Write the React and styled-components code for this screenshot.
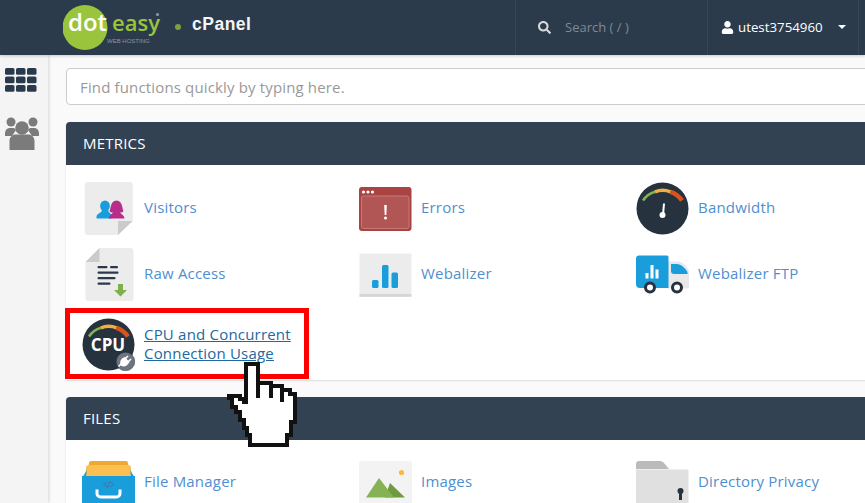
import styled, { createGlobalStyle } from "styled-components";
import { FaSearch, FaUser } from "react-icons/fa";

const GlobalStyle = createGlobalStyle`
  html, body {
    margin: 0;
    padding: 0;
    background: #fafafa;
  }
  * {
    box-sizing: border-box;
  }
`;

function Logo() {
  return (
    <svg width="100" height="50" viewBox="0 0 100 50">
      <circle cx="22" cy="24.500" r="22.500" fill="#9ac43c" />
      <text x="5" y="27.500" fontFamily="Open Sans" fontWeight="600" fontSize="24" fill="#fff">dot</text>
      <text x="49" y="27.500" fontFamily="Open Sans" fontWeight="600" fontSize="22" fill="#9ac43c">easy</text>
      <text x="44" y="39.500" fontFamily="Liberation Sans" fontSize="6" fill="#8d97a2">WEB HOSTING</text>
      <circle cx="94.500" cy="11.500" r="1.600" fill="#8d97a2" />
    </svg>
  );
}

function GridIcon() {
  const cells = [];
  [0, 8.5, 17].forEach((y) => {
    [0, 11, 22].forEach((x) => {
      cells.push(<rect key={x + "-" + y} x={x} y={y} width="9.5" height="6.8" rx="1.6" fill="#293a4c" />);
    });
  });
  return (
    <svg width="32" height="24" viewBox="0 0 32 24">
      {cells}
    </svg>
  );
}

function UsersIcon() {
  return (
    <svg width="34" height="33" viewBox="0 0 34 33" fill="#7b7b7b">
      <circle cx="6" cy="5" r="4.5" />
      <circle cx="28" cy="5" r="4.5" />
      <path d="M0 17c0-4 2-6 5-6h4l2 2-4 6H0z" />
      <path d="M34 17c0-4-2-6-5-6h-4l-2 2 4 6h7z" />
      <circle cx="17" cy="11" r="6.8" />
      <path d="M4.5 33v-9c0-4 3-6.500 6-6.500h13c3 0 6 2.500 6 6.500v9c0 .500-.5 0-1 0H5.500z" />
    </svg>
  );
}

function VisitorsIcon() {
  return (
    <svg width="53" height="53" viewBox="0 0 53 53">
      <path d="M6.500 0h42a3 3 0 0 1 3 3v36l-15 14h-30a3 3 0 0 1-3-3V3a3 3 0 0 1 3-3z" transform="translate(-0.700 0)" fill="#ececec" />
      <path d="M50.500 39H36v14z" fill="#cbcbcb" />
      <path d="M14.500 36.500v-2c0-2.500 4-3.500 5-5 .5-1 .2-1.500-.5-2.500-1.500-2-1.500-8 4-8.500 5.500.5 5.500 6.500 4 8.500-.7 1-1 1.500-.5 2.500 1 1.500 3 2.500 3 4.500v2.500z" fill="#1a9edb" />
      <path d="M27 36.500c-.5-3 3-4.500 4-6-1.500 0-3-.5-3.500-1.500 1.500-2 .5-10 7-10.500 6.500.5 5.500 8.500 7 10.500-.5 1-2 1.500-3.500 1.500 1 1.500 4.500 3 4.500 6z" fill="#b92d8a" />
    </svg>
  );
}

function RawAccessIcon() {
  return (
    <svg width="53" height="53" viewBox="0 0 53 53">
      <path d="M17.500 0h31a3 3 0 0 1 3 3v47a3 3 0 0 1-3 3h-42a3 3 0 0 1-3-3V14z" fill="#ececec" />
      <path d="M17.500 0v14H3.500z" fill="#cbcbcb" />
      <g fill="#2b3a4a">
        <rect x="15.500" y="18" width="10" height="2.200" rx="1" />
        <rect x="28" y="18" width="8" height="2.200" rx="1" />
        <rect x="15.500" y="23.500" width="21" height="2.200" rx="1" />
        <rect x="15.500" y="29" width="18" height="2.200" rx="1" />
        <rect x="15.500" y="34.500" width="13" height="2.200" rx="1" />
      </g>
      <path d="M36 36h5v6h4l-6.500 6.500L32 42h4z" fill="#7fb04b" />
    </svg>
  );
}

function ErrorsIcon() {
  return (
    <svg width="53" height="53" viewBox="0 0 53 53">
      <rect x="0" y="5" width="52.500" height="44" rx="3" fill="#a94442" />
      <rect x="2.500" y="14" width="47.500" height="32.500" rx="2" fill="#b25655" stroke="#c47a79" />
      <circle cx="4.500" cy="10" r="1.600" fill="#fff" />
      <circle cx="9" cy="10" r="1.600" fill="#fff" />
      <circle cx="13.500" cy="10" r="1.600" fill="#fff" />
      <path d="M25.200 23h2.600l-.5 10h-1.600z" fill="#fff" />
      <circle cx="26.500" cy="36" r="1.500" fill="#fff" />
    </svg>
  );
}

function Gauge({ children }) {
  return (
    <svg width="53" height="53" viewBox="0 0 53 53">
      <circle cx="26.500" cy="26.500" r="26" fill="#26323e" />
      <path d="M7 18.500A22 22 0 0 1 19 9.800" fill="none" stroke="#86b34e" strokeWidth="2.500" />
      <path d="M19 9.800A22 22 0 0 1 34.500 9.800" fill="none" stroke="#f0b040" strokeWidth="3.500" />
      <path d="M34.500 9.800A22 22 0 0 1 46 18.500" fill="none" stroke="#d9531e" strokeWidth="4.500" />
      {children}
    </svg>
  );
}

function BandwidthIcon() {
  return (
    <Gauge>
      <path d="M27 21.500h2l-1 11.500h-2z" fill="#fff" />
      <circle cx="26.500" cy="33" r="3" fill="#fff" />
    </Gauge>
  );
}

function WebalizerIcon() {
  return (
    <svg width="53" height="53" viewBox="0 0 53 53">
      <path d="M2 5.500h49a1.500 1.500 0 0 1 1.500 1.500v41.500H.5V7A1.500 1.500 0 0 1 2 5.500z" fill="#ececec" />
      <rect x=".5" y="46" width="52" height="2.800" fill="#d5d5d5" />
      <rect x="13" y="32" width="6.500" height="8" rx="1.500" fill="#1a9edb" />
      <rect x="23" y="17" width="6.500" height="23" rx="1.500" fill="#1a9edb" />
      <rect x="32.500" y="24.500" width="6.500" height="15.500" rx="1.500" fill="#1a9edb" />
    </svg>
  );
}

function TruckIcon() {
  return (
    <svg width="53" height="53" viewBox="0 0 53 53">
      <path d="M32 13.500h10c5 0 10 6 11 10v15a2 2 0 0 1-2 2H32z" fill="#e9e9e9" />
      <path d="M35 16h6c4 0 8 4 10.500 8v2H38a3 3 0 0 1-3-3z" fill="#1a9edb" />
      <path d="M3 7.500h28a1.500 1.500 0 0 1 1.500 1.500v31H4a4 4 0 0 1-4-4V10.500a3 3 0 0 1 3-3z" fill="#1a9edb" />
      <g fill="#fff">
        <rect x="9.500" y="25" width="3" height="5.500" />
        <rect x="14.500" y="17" width="3" height="13.500" />
        <rect x="19.500" y="21.500" width="3" height="9" />
      </g>
      <circle cx="14" cy="39.500" r="4.500" fill="#fff" stroke="#26323e" strokeWidth="3" />
      <circle cx="41" cy="39.500" r="4.500" fill="#fff" stroke="#26323e" strokeWidth="3" />
    </svg>
  );
}

function CpuIcon() {
  return (
    <Gauge>
      <text x="26" y="33" textAnchor="middle" fontFamily="Open Sans" fontWeight="700" fontSize="17" fill="#fff">CPU</text>
      <circle cx="43.500" cy="43.500" r="9.300" fill="#6d7680" stroke="#26323e" strokeWidth=".5" />
      <path d="M39 46l-2.500 2.500M39.500 47c3 1.500 5.500-.5 7-3l-4-4c-3 1-4.500 4-3 7zM43 41l3-3M46 44l3-3" fill="#fff" stroke="#fff" strokeWidth="1.600" />
    </Gauge>
  );
}

function FileManagerIcon() {
  return (
    <svg width="53" height="53" viewBox="0 0 53 53">
      <path d="M7 2a2 2 0 0 1 2-2h35a2 2 0 0 1 2 2l1 6H6z" fill="#f0a830" />
      <path d="M4 7a3 3 0 0 1 3-3h39a3 3 0 0 1 3 3l1 12H3z" fill="#fbc04f" />
      <path d="M5 9 0 17v31a3 3 0 0 0 3 3h47a3 3 0 0 0 3-3V17l-5-8 1 6H4z" fill="#1a9edb" />
      <rect x="0" y="15" width="53" height="36" fill="#1a9edb" />
      <path d="M15 28.500v4a3.500 3.500 0 0 0 3.500 3.500h16a3.500 3.500 0 0 0 3.500-3.500v-4" fill="none" stroke="#fff" strokeWidth="3" />
      <path d="M25 21l-3.500 2.500 3.500 2.500M28 21l3.500 2.500-3.500 2.500M27.500 20l-2 7" fill="none" stroke="#3878a8" strokeWidth="1" />
    </svg>
  );
}

function ImagesIcon() {
  return (
    <svg width="53" height="53" viewBox="0 0 53 53">
      <rect x="0" y="0" width="53" height="53" rx="3" fill="#f3f3f3" />
      <circle cx="42.500" cy="11.500" r="2.600" fill="#f9b94a" />
      <path d="M31 22l15 14.500H26z" fill="#6f9a3f" />
      <path d="M20 17l15 19.500H7z" fill="#84b254" />
    </svg>
  );
}

function PrivacyIcon() {
  return (
    <svg width="53" height="53" viewBox="0 0 53 53">
      <path d="M3 0h21c2 0 3 1 4 2l5 6H0V3a3 3 0 0 1 3-3z" fill="#bbb" />
      <path d="M0 8.500h51a1.500 1.500 0 0 1 1.500 1.500v43H0z" fill="#e0e0e0" />
      <circle cx="44.500" cy="30" r="3" fill="#26323e" />
      <rect x="43" y="30" width="3" height="9" fill="#26323e" />
    </svg>
  );
}

function HandCursor() {
  return (
    <HandSvg width="85" height="100" viewBox="0 0 85 100" shapeRendering="crispEdges">
      <path
        d="M26 12H38V31H51V34H62V38H70V42H75V70H71V83H67V93H30V83H27V76H24V68H20V60H16V55H12V46H9V44H20V47H24V50H26Z"
        fill="#fff"
        stroke="#111"
        strokeWidth="4"
      />
      <path d="M38 31V46M51 34V46M62 38V50" fill="none" stroke="#111" strokeWidth="4" />
    </HandSvg>
  );
}

export default function App() {
  const metrics = [
    { icon: <VisitorsIcon />, label: "Visitors" },
    { icon: <ErrorsIcon />, label: "Errors" },
    { icon: <BandwidthIcon />, label: "Bandwidth" },
    { icon: <RawAccessIcon />, label: "Raw Access" },
    { icon: <WebalizerIcon />, label: "Webalizer" },
    { icon: <TruckIcon />, label: "Webalizer FTP" },
  ];
  const files = [
    { icon: <FileManagerIcon />, label: "File Manager" },
    { icon: <ImagesIcon />, label: "Images" },
    { icon: <PrivacyIcon />, label: "Directory Privacy" },
  ];

  return (
    <Page>
      <GlobalStyle />
      <TopBar>
        <Brand>
          <Logo />
          <BrandDot />
          <BrandName>cPanel</BrandName>
        </Brand>
        <SearchCell>
          <FaSearch size={13} color="#d5dade" />
          <SearchHint>Search ( / )</SearchHint>
        </SearchCell>
        <UserCell>
          <FaUser size={13} color="#fff" />
          <UserName>utest3754960</UserName>
          <Caret />
        </UserCell>
        <EndCell />
      </TopBar>
      <Main>
        <Sidebar>
          <GridIcon />
          <UsersIcon />
        </Sidebar>
        <Content>
          <QuickFind placeholder="Find functions quickly by typing here." />
          <Section>
            <SectionTitle>Metrics</SectionTitle>
            <ItemGrid $rows="66px 66px 73px" $top={10}>
              {metrics.map((m) => (
                <Item key={m.label}>
                  {m.icon}
                  <ItemLink>{m.label}</ItemLink>
                </Item>
              ))}
              <Item $nudge>
                <CpuIcon />
                <ItemLink $active>
                  CPU and Concurrent
                  <br />
                  Connection Usage
                </ItemLink>
              </Item>
            </ItemGrid>
          </Section>
          <Section>
            <SectionTitle>Files</SectionTitle>
            <ItemGrid $rows="66px" $top={21}>
              {files.map((f) => (
                <Item key={f.label} $alignTop>
                  {f.icon}
                  <ItemLink $alignTop>{f.label}</ItemLink>
                </Item>
              ))}
            </ItemGrid>
          </Section>
        </Content>
      </Main>
      <Highlight />
      <HandCursor />
    </Page>
  );
}

const Page = styled.div`
  position: relative;
  width: 865px;
  height: 503px;
  overflow: hidden;
  background: #fafafa;
  font-family: "Open Sans", sans-serif;
`;

const TopBar = styled.header`
  position: relative;
  z-index: 2;
  display: flex;
  height: 55px;
  background: #2b3b4c;
  box-shadow: 0 1px 3px rgba(0, 0, 0, 0.2);
`;

const Brand = styled.div`
  flex: 1;
  display: flex;
  align-items: center;
  padding-left: 63px;
`;

const BrandDot = styled.span`
  width: 6px;
  height: 6px;
  margin: -2px 0 0 12px;
  border-radius: 50%;
  background: #7f9f45;
`;

const BrandName = styled.span`
  margin: -6px 0 0 11px;
  font-family: "Liberation Sans", sans-serif;
  font-size: 17.5px;
  font-weight: 700;
  letter-spacing: 0.5px;
  color: #f4f5f6;
`;

const SearchCell = styled.div`
  width: 192px;
  display: flex;
  align-items: center;
  gap: 14px;
  padding: 0 0 1px 22px;
  border-left: 1px solid #36475a;
`;

const SearchHint = styled.span`
  font-size: 13px;
  color: #7f8a95;
`;

const UserCell = styled.div`
  width: 151px;
  display: flex;
  align-items: center;
  padding: 0 0 1px 13px;
  border-left: 1px solid #36475a;
`;

const UserName = styled.span`
  margin-left: 4px;
  font-size: 13.3px;
  color: #fff;
`;

const Caret = styled.span`
  margin-left: 15px;
  border-top: 4.5px solid #fff;
  border-left: 4.5px solid transparent;
  border-right: 4.5px solid transparent;
`;

const EndCell = styled.div`
  width: 7px;
  border-left: 1px solid #36475a;
`;

const Main = styled.div`
  display: flex;
  height: 448px;
`;

const Sidebar = styled.nav`
  width: 48px;
  flex-shrink: 0;
  display: flex;
  flex-direction: column;
  align-items: flex-start;
  gap: 25px;
  padding: 13px 0 0 5px;
  background: #f4f4f4;
  box-shadow: 1px 0 3px rgba(0, 0, 0, 0.15);
`;

const Content = styled.main`
  width: 830px;
  flex-shrink: 0;
  padding: 13px 0 0 18px;
`;

const QuickFind = styled.input`
  display: block;
  width: 100%;
  height: 37px;
  padding: 0 13px;
  border: 1px solid #ccc;
  border-radius: 4px;
  background: #fff;
  outline: none;
  font-family: "Open Sans", sans-serif;
  font-size: 15px;
  letter-spacing: 0.15px;
  &::placeholder {
    color: #999;
    opacity: 1;
  }
`;

const Section = styled.section`
  margin-top: 17px;
  background: #fff;
  border-radius: 4px 4px 0 0;
  box-shadow: 0 1px 2px rgba(0, 0, 0, 0.12);
`;

const SectionTitle = styled.h2`
  margin: 0;
  height: 43px;
  padding-left: 17px;
  line-height: 42px;
  border-radius: 4px 4px 0 0;
  background: #324252;
  font-size: 15px;
  font-weight: 400;
  letter-spacing: 0.2px;
  text-transform: uppercase;
  color: #fff;
`;

const ItemGrid = styled.div`
  display: grid;
  grid-template-columns: repeat(3, 277px);
  grid-template-rows: ${(p) => p.$rows};
  padding: ${(p) => p.$top}px 0 0 16px;
`;

const Item = styled.div`
  display: flex;
  align-items: ${(p) => (p.$alignTop ? "flex-start" : "center")};
  gap: 9px;
  padding-top: ${(p) => (p.$nudge ? "2px" : "0")};
  svg {
    flex-shrink: 0;
  }
`;

const ItemLink = styled.a`
  margin-top: ${(p) => (p.$alignTop ? "11px" : "-1px")};
  font-size: 15px;
  letter-spacing: 0.2px;
  line-height: 19px;
  color: ${(p) => (p.$active ? "#23689f" : "#4f8fd0")};
  text-decoration: ${(p) => (p.$active ? "underline" : "none")};
`;

const Highlight = styled.div`
  position: absolute;
  left: 65px;
  top: 308px;
  width: 244px;
  height: 71px;
  border: 5px solid #f00;
`;

const HandSvg = styled.svg`
  position: absolute;
  left: 220px;
  top: 352px;
`;
